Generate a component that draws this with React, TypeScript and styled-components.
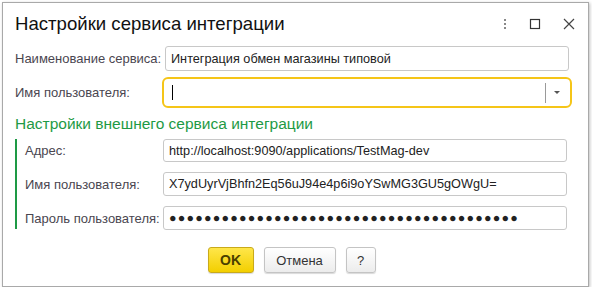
import React from 'react'
import styled, { createGlobalStyle } from 'styled-components'

const Global = createGlobalStyle`
  html, body {
    margin: 0;
    padding: 0;
    background: #ffffff;
  }
  body {
    font-family: Arial, "Liberation Sans", sans-serif;
  }
`

const Window = styled.div`
  box-sizing: border-box;
  margin: 2px 0 0 2px;
  width: 587px;
  height: 285px;
  border: 1px solid #a9a9a9;
  background: #fff;
  box-shadow: 1px 1px 3px rgba(0, 0, 0, 0.25);
  display: flex;
  flex-direction: column;
  padding: 0 0 0 12px;
`

const Header = styled.div`
  display: flex;
  align-items: center;
  height: 42px;
  padding-right: 13px;
`

const Title = styled.div`
  flex: 1;
  font-size: 18.6px;
  color: #111;
`

const Tools = styled.div`
  display: flex;
  align-items: center;
  gap: 22px;
`

const ToolIcon = styled.svg`
  display: block;
`

const Row = styled.div<{ $top: number }>`
  display: flex;
  align-items: center;
  margin-top: ${p => p.$top}px;
`

const Label = styled.div<{ $width: number }>`
  width: ${p => p.$width}px;
  flex: none;
  font-size: 13px;
  color: #4a4650;
  white-space: nowrap;
`

const Field = styled.div<{ $h: number; $focus?: boolean }>`
  box-sizing: border-box;
  width: 404px;
  height: ${p => p.$h}px;
  border: 1px solid ${p => (p.$focus ? '#fff' : '#c8c8c8')};
  border-radius: 3px;
  outline: ${p => (p.$focus ? '2px solid #f5c518' : 'none')};
  outline-offset: ${p => (p.$focus ? '1px' : '0')};
  display: flex;
  align-items: center;
  padding-left: 5px;
  font-size: 12.7px;
  color: #222;
  white-space: nowrap;
  overflow: hidden;
`

const Dots = styled.span`
  font-size: 12.5px;
  letter-spacing: 1.2px;
  color: #222;
`

const Caret = styled.div`
  width: 1px;
  height: 15px;
  background: #000;
  margin-left: 1px;
`

const Spacer = styled.div`
  flex: 1;
`

const DropSep = styled.div`
  width: 1px;
  height: 20px;
  background: #9a9a9a;
`

const DropArrow = styled.div`
  width: 22px;
  display: flex;
  justify-content: center;
`

const GroupTitle = styled.div`
  margin-top: 10px;
  font-size: 15.5px;
  color: #1e9a45;
`

const Group = styled.div`
  margin-top: 6px;
  border-left: 2px solid #1e9a45;
  padding: 0 0 0 8px;
  height: 90px;
  display: flex;
  flex-direction: column;
`

const Buttons = styled.div`
  display: flex;
  justify-content: center;
  gap: 10px;
  margin-top: 18px;
  padding-right: 12px;
  margin-left: -12px;
  padding-left: 4px;
`

const Button = styled.div<{ $w: number; $primary?: boolean }>`
  box-sizing: border-box;
  width: ${p => p.$w}px;
  height: 26px;
  border-radius: 3px;
  border: 1px solid ${p => (p.$primary ? '#c9aa1a' : '#c4c4c4')};
  background: ${p =>
    p.$primary
      ? 'linear-gradient(#ffe64a, #f3cf00)'
      : 'linear-gradient(#ffffff, #ececec)'};
  box-shadow: 0 1px 1px rgba(0, 0, 0, 0.15);
  display: flex;
  align-items: center;
  justify-content: center;
  font-size: ${p => (p.$primary ? '14px' : '13px')};
  font-weight: ${p => (p.$primary ? 'bold' : 'normal')};
  color: ${p => (p.$primary ? '#4a3f00' : '#333')};
`

const App = () => (
  <>
    <Global />
    <Window>
      <Header>
        <Title>Настройки сервиса интеграции</Title>
        <Tools>
          <ToolIcon width="4" height="12" viewBox="0 0 4 12">
            <rect x="1" y="1" width="2" height="2" fill="#888" />
            <rect x="1" y="5" width="2" height="2" fill="#888" />
            <rect x="1" y="9" width="2" height="2" fill="#888" />
          </ToolIcon>
          <ToolIcon width="12" height="12" viewBox="0 0 12 12">
            <rect x="1.5" y="1.5" width="9" height="9" fill="none" stroke="#333" strokeWidth="1.2" />
          </ToolIcon>
          <ToolIcon width="12" height="12" viewBox="0 0 12 12">
            <path d="M1 1 L11 11 M11 1 L1 11" stroke="#444" strokeWidth="1.2" />
          </ToolIcon>
        </Tools>
      </Header>

      <Row $top={1}>
        <Label $width={150}>Наименование сервиса:</Label>
        <Field $h={25}>Интеграция обмен магазины типовой</Field>
      </Row>
      <Row $top={9}>
        <Label $width={150}>Имя пользователя:</Label>
        <Field $h={25} $focus>
          <Caret />
          <Spacer />
          <DropSep />
          <DropArrow>
            <svg width="6" height="4" viewBox="0 0 6 4">
              <path d="M0 0 H6 L3 3 Z" fill="#555" />
            </svg>
          </DropArrow>
        </Field>
      </Row>

      <GroupTitle>Настройки внешнего сервиса интеграции</GroupTitle>
      <Group>
        <Row $top={0}>
          <Label $width={138}>Адрес:</Label>
          <Field $h={23}>http://localhost:9090/applications/TestMag-dev</Field>
        </Row>
        <Row $top={10}>
          <Label $width={138}>Имя пользователя:</Label>
          <Field $h={24}>X7ydUyrVjBhfn2Eq56uJ94e4p6i9oYSwMG3GU5gOWgU=</Field>
        </Row>
        <Row $top={10}>
          <Label $width={138}>Пароль пользователя:</Label>
          <Field $h={24}>
            <Dots>{'●'.repeat(40)}</Dots>
          </Field>
        </Row>
      </Group>

      <Buttons>
        <Button $w={46} $primary>OK</Button>
        <Button $w={72}>Отмена</Button>
        <Button $w={30}>?</Button>
      </Buttons>
    </Window>
  </>
)

export default App
